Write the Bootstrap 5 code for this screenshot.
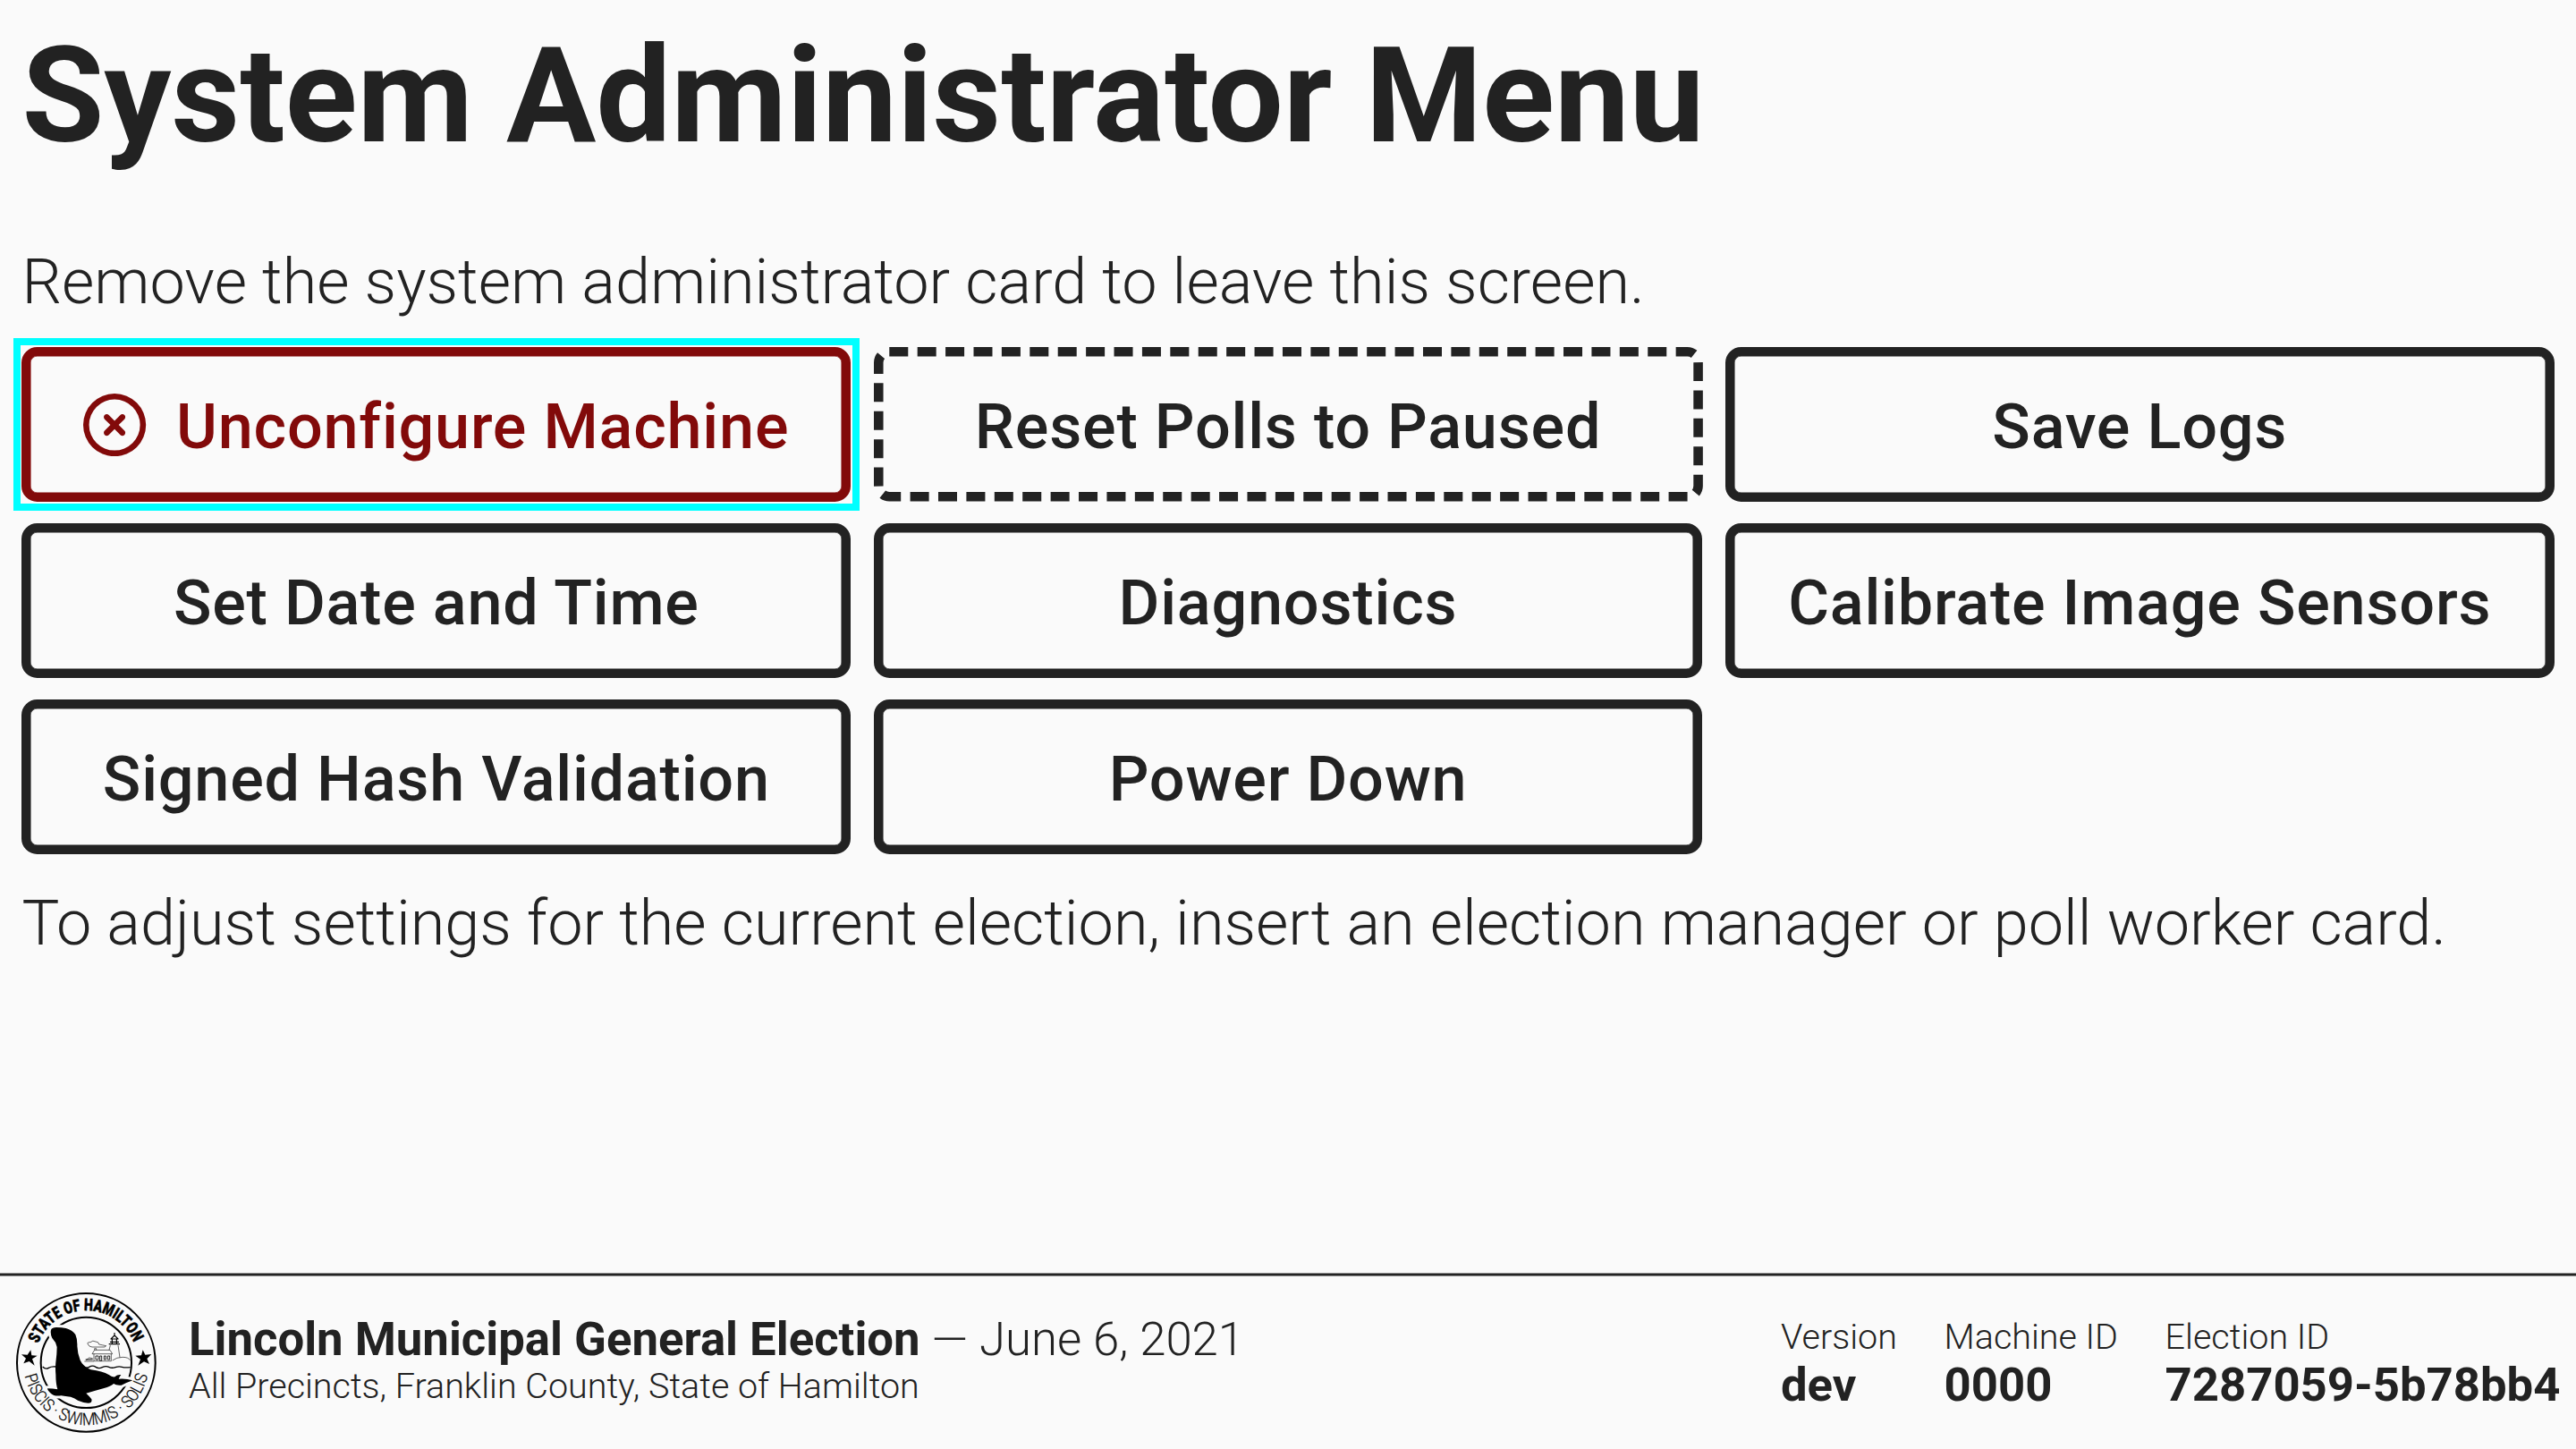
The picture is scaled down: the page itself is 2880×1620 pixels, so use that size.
<!DOCTYPE html>
<html lang="en">
<head>
<meta charset="utf-8">
<title>System Administrator Menu</title>
<link href="https://cdn.jsdelivr.net/npm/bootstrap@5.3.0/dist/css/bootstrap.min.css" rel="stylesheet">
<style>
  :root { font-size: 70.2px; }
  body { background: #fafafa; color: #222; font-family: Roboto, "Liberation Sans", sans-serif; font-weight: 300; line-height: 1.2; }
  .screen { height: 100vh; overflow: hidden; }
  .screen-main { padding: 16.5px 24.3px 0 24.4px; }
  .screen-title { font-size: 149.35px; font-weight: 700; line-height: 179px; margin-bottom: 77.3px; }
  .intro { margin-bottom: 31.4px; }
  .menu-grid { display: grid; grid-template-columns: repeat(3, 1fr); gap: 24.3px 25.4px; margin-bottom: 35.2px; }
  .menu-btn { --bs-btn-color: #222; --bs-btn-hover-color: #222; --bs-btn-font-weight: 500; position: relative; height: 172.6px; padding: 0; gap: 33.4px; font-size: 1rem; line-height: 1.2; letter-spacing: .011em; border: 10px solid #222; border-radius: .25rem; box-shadow: inset 0 0 0 .54px #222; }
  .menu-btn .btn-text { padding-top: 4.4px; }
  .menu-btn-danger { --bs-btn-color: #820a0a; border-color: #820a0a; box-shadow: inset 0 0 0 .54px #820a0a; }
  .menu-btn-danger::after { content: ""; position: absolute; inset: -20px -20px -20px -19px; border: 8px solid #0ff; }
  .menu-btn-danger svg { width: 1rem; height: 1rem; }
  .menu-btn-dashed { border-color: transparent; box-shadow: none; }
  .menu-btn-dashed svg { position: absolute; left: -10px; top: -10px; width: calc(100% + 20px); height: calc(100% + 20px); overflow: visible; }
  .menu-btn-dashed rect { x: 5.27px; y: 5.27px; width: calc(100% - 10.54px); height: calc(100% - 10.54px); rx: 12px; fill: none; stroke: #222; stroke-width: 10.54px; stroke-dasharray: .669 .331; }
  .footer-rule { height: 4px; background: linear-gradient(#8c8c8c 25%, #222 25% 75%, #8c8c8c 75%); }
  .election-bar { height: 193px; padding: 0 17.6px 0 18.4px; }
  .seal { width: 156.7px; height: 156.7px; margin-right: 35.9px; }
  .election-info { padding-bottom: 6px; }
  .f-big { font-size: .75rem; }
  .f-small { font-size: .5625rem; }
  .election-info .f-big { font-size: 52.7px; line-height: 58px; }
  .election-info .f-small { line-height: 47px; }
  .ids { gap: 52.7px; }
  .ids .f-small { line-height: 50px; }
  .ids .f-big { line-height: 57px; }
</style>
</head>
<body>
<div class="screen d-flex flex-column">
  <main class="screen-main flex-grow-1">
    <h1 class="screen-title mt-0">System Administrator Menu</h1>
    <p class="intro">Remove the system administrator card to leave this screen.</p>
    <div class="menu-grid">
      <button class="btn menu-btn menu-btn-danger d-flex align-items-center justify-content-center" type="button">
        <svg viewBox="0 0 512 512" fill="currentColor" aria-hidden="true"><path d="M256 48a208 208 0 1 1 0 416 208 208 0 1 1 0-416zm0 464A256 256 0 1 0 256 0a256 256 0 1 0 0 512zM175 175c-9.400 9.400-9.400 24.600 0 33.900l47 47-47 47c-9.400 9.400-9.400 24.600 0 33.900s24.600 9.400 33.900 0l47-47 47 47c9.400 9.400 24.600 9.400 33.900 0s9.400-24.600 0-33.900l-47-47 47-47c9.400-9.400 9.400-24.600 0-33.900s-24.600-9.400-33.900 0l-47 47-47-47c-9.400-9.400-24.600-9.400-33.900 0z"/></svg>
        <span class="btn-text">Unconfigure Machine</span>
      </button>
      <button class="btn menu-btn menu-btn-dashed d-flex align-items-center justify-content-center" type="button">
        <svg aria-hidden="true"><rect pathLength="68"/></svg>
        <span class="btn-text">Reset Polls to Paused</span>
      </button>
      <button class="btn menu-btn d-flex align-items-center justify-content-center" type="button"><span class="btn-text">Save Logs</span></button>
      <button class="btn menu-btn d-flex align-items-center justify-content-center" type="button"><span class="btn-text">Set Date and Time</span></button>
      <button class="btn menu-btn d-flex align-items-center justify-content-center" type="button"><span class="btn-text">Diagnostics</span></button>
      <button class="btn menu-btn d-flex align-items-center justify-content-center" type="button"><span class="btn-text">Calibrate Image Sensors</span></button>
      <button class="btn menu-btn d-flex align-items-center justify-content-center" type="button"><span class="btn-text">Signed Hash Validation</span></button>
      <button class="btn menu-btn d-flex align-items-center justify-content-center" type="button"><span class="btn-text">Power Down</span></button>
    </div>
    <p class="mb-0">To adjust settings for the current election, insert an election manager or poll worker card.</p>
  </main>
  <footer>
    <div class="footer-rule"></div>
    <div class="election-bar d-flex align-items-center">
      <svg class="seal flex-shrink-0" viewBox="55 75 470 470" fill="none" stroke="#000" stroke-linejoin="round" role="img" aria-label="Seal of the State of Hamilton">
        <defs>
          <path id="arc-top" d="M129 247A172 172 0 0 1 451 247"/>
          <path id="arc-bottom" d="M84 354A211 211 0 0 0 496 354"/>
          <path id="sea-lion" d="M172 200Q176 192 190 192Q208 192 222 195Q244 201 254 216Q261 232 260 255Q261 280 270 302Q281 325 306 334Q344 339 366 351Q377 360 386 358Q395 349 407 351Q401 358 399 365Q424 363 446 370Q424 378 408 386Q392 388 382 381Q372 390 350 396Q318 405 290 413Q300 422 308 433Q311 446 297 446Q280 445 262 437Q252 429 238 425Q220 424 206 421Q182 424 172 414Q160 404 160 397Q178 397 194 400Q188 380 188 350Q186 330 188 310Q192 280 192 258Q188 240 176 228Q169 214 172 200Z"/>
        </defs>
        <circle cx="290" cy="310" r="232" stroke-width="6"/>
        <circle cx="290" cy="310" r="152" stroke-width="6"/>
        <use href="#sea-lion" stroke="#fafafa" stroke-width="18"/>
        <g fill="#000" stroke="none">
          <text font-family="Roboto, sans-serif" font-weight="900" font-size="56" stroke="#000" stroke-width="1.500"><textPath href="#arc-top" textLength="412" lengthAdjust="spacingAndGlyphs">STATE OF HAMILTON</textPath></text>
          <text font-family="Roboto, sans-serif" font-weight="300" font-size="57" stroke="#000" stroke-width=".6"><textPath href="#arc-bottom" textLength="572" lengthAdjust="spacingAndGlyphs">PISCIS · SWIMMIS · SOLIS</textPath></text>
          <path d="M104 268L107 286L126 287L109 298L117 320L99 306L80 313L88 296L73 283L93 284Z"/>
          <path d="M480 268L488 284L509 282L494 297L502 315L484 307L464 320L472 299L455 287L475 286Z"/>
        </g>
        <path stroke-width="4" d="M144 324Q154 334 164 328T188 324M278 321Q288 332 300 325T322 325T344 326T366 325T388 326T410 325T438 326"/>
        <g stroke-width="1.800">
          <path d="M296 249Q292 241 304 242Q312 234 322 240Q332 240 333 249Q342 251 357 254L352 258H310Q299 257 296 249Z"/>
          <path d="M318 268H370L378 281H310ZM316 281V305H374V281M318 268V263H324V268"/>
          <path d="M322 288h9v12h-9zM336 288h6v16h-6zM350 288h6v12h-6zM362 288h7v12h-7z" stroke-width="2.500"/>
          <path d="M371 252L367 268M397 252L403 293M378 303Q392 292 412 292T437 302"/>
          <path d="M284 306H316M290 302L300 294L312 296" />
        </g>
        <path stroke-width="3.500" d="M366 248H403M370 241H400M385 210V222M373 231L385 219L397 231ZM377 231V247M392 231V247M288 300H312"/>
        <use href="#sea-lion" fill="#000" stroke="none"/>
      </svg>
      <div class="election-info flex-grow-1">
        <div class="f-big"><strong class="fw-bold">Lincoln Municipal General Election</strong> — June 6, 2021</div>
        <div class="f-small">All Precincts, Franklin County, State of Hamilton</div>
      </div>
      <div class="ids d-flex">
        <div><div class="f-small">Version</div><div class="f-big fw-bold">dev</div></div>
        <div><div class="f-small">Machine ID</div><div class="f-big fw-bold">0000</div></div>
        <div><div class="f-small">Election ID</div><div class="f-big fw-bold">7287059-5b78bb4</div></div>
      </div>
    </div>
  </footer>
</div>
<script src="https://cdn.jsdelivr.net/npm/bootstrap@5.3.0/dist/js/bootstrap.bundle.min.js"></script>
</body>
</html>
